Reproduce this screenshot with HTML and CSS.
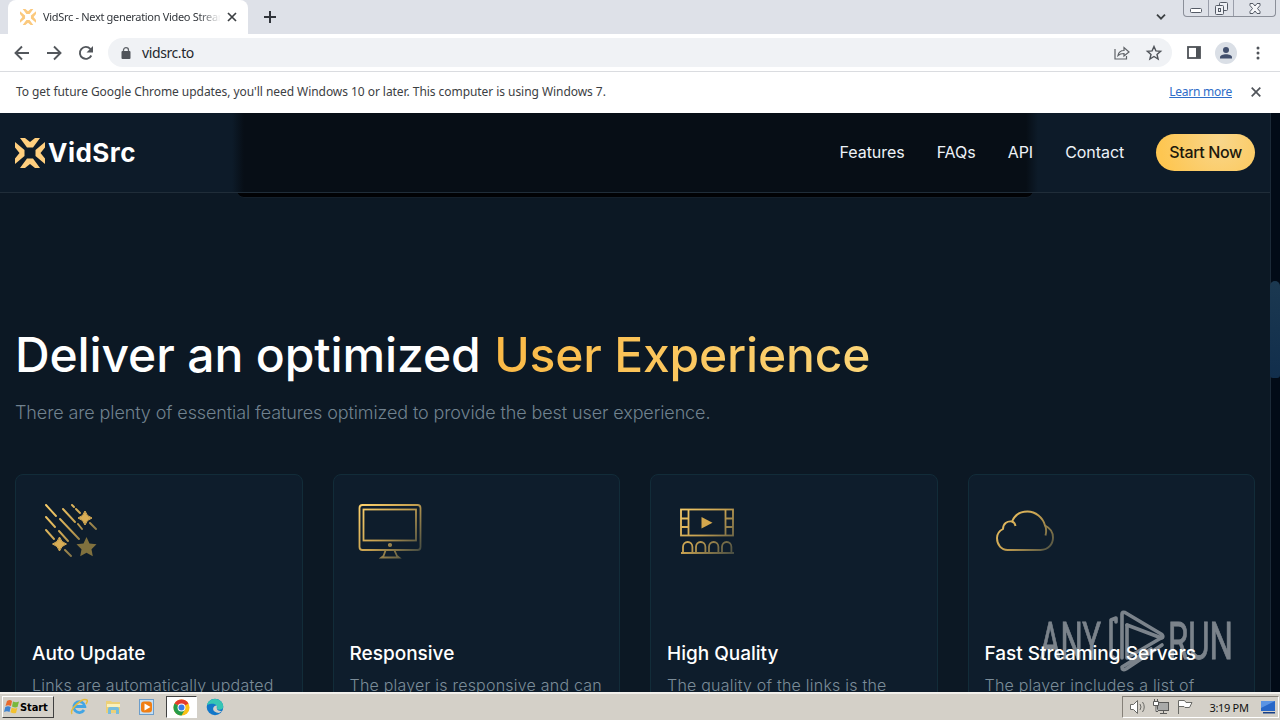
FILE: index.html
```html
<!DOCTYPE html>
<html lang="en">
<head>
    <meta charset="UTF-8">
    <title>VidSrc - Next generation Video Streaming</title>
    <link rel="stylesheet" href="styles.css">
</head>
<body>
    <!-- shared gradients and logo -->
    <svg class="defs" width="0" height="0">
        <defs>
            <linearGradient id="gold" gradientUnits="userSpaceOnUse" x1="12" y1="10" x2="68" y2="66">
                <stop offset="0" stop-color="#ffd36c"/>
                <stop offset="0.5" stop-color="#c5a050"/>
                <stop offset="1" stop-color="#3b4541"/>
            </linearGradient>
            <symbol id="logo" viewBox="0 0 30 30">
                <path d="M5 0h5l5 4 5-4h5l-7 9.500h-6zM5 30h5l5-4 5 4h5l-7-9.500h-6zM0 4l9.500 8v6L0 26v-5.500l4.500-5.500L0 9.500zM30 4l-9.500 8v6l9.500 8v-5.500L25.500 15 30 9.500z"/>
            </symbol>
        </defs>
    </svg>

    <div class="tabs">
        <div class="prev-tab"></div>
        <div class="tab">
            <svg class="favicon" width="16" height="16"><use href="#logo"/></svg>
            <span class="tab-title">VidSrc - Next generation Video Streaming</span>
            <svg width="10" height="10" viewBox="0 0 10 10"><path d="M1 1l8 8M9 1l-8 8" stroke="#3c4043" stroke-width="1.7"/></svg>
        </div>
        <svg class="new-tab" width="12" height="12" viewBox="0 0 12 12"><path d="M6 0v12M0 6h12" stroke="#30343a" stroke-width="2"/></svg>
        <svg class="tab-search" width="10" height="6" viewBox="0 0 10 6"><path d="M1 .7l4 4 4-4" fill="none" stroke="#3c4043" stroke-width="1.8"/></svg>
        <div class="win-buttons">
            <span class="min"><svg width="12" height="5" viewBox="0 0 12 5"><rect x=".5" y=".5" width="11" height="4" rx="1" fill="#fff" stroke="#555b66"/></svg></span>
            <span class="max"><svg width="13" height="13" viewBox="0 0 13 13" fill="#eef0f5" stroke="#555b66"><rect x="4.500" y=".5" width="8" height="8" rx="1"/><rect x=".5" y="3.500" width="8" height="9" rx="1"/><rect x="3.500" y="6.500" width="2" height="3"/></svg></span>
            <span class="close"><svg width="12" height="11" viewBox="0 0 12 11"><path d="M1 .5h3l2 2.500 2-2.500h3v2l-2.500 3L11 8.500v2H8L6 8l-2 2.500H1v-2l2.500-3L1 2.500z" fill="#f5f6f9" stroke="#555b66"/></svg></span>
        </div>
    </div>

    <div class="toolbar">
        <svg width="16" height="16" viewBox="0 0 16 16"><path d="M15 8H2M8 1.500L1.500 8 8 14.500" fill="none" stroke="#53575c" stroke-width="1.900"/></svg>
        <svg width="16" height="16" viewBox="0 0 16 16"><path d="M1 8h13M8 1.500L14.500 8 8 14.500" fill="none" stroke="#53575c" stroke-width="1.900"/></svg>
        <svg width="16" height="16" viewBox="0 0 16 16"><path d="M13.300 10.500A6 6 0 1 1 12.300 3.800L14 5.500" fill="none" stroke="#53575c" stroke-width="1.900"/><path d="M15 1v6.500H8.500z" fill="#53575c"/></svg>
        <div class="omnibox">
            <svg width="10" height="12" viewBox="0 0 10 12"><path d="M2.500 5V3a2.500 2.300 0 0 1 5 0v2" fill="none" stroke="#5f6368" stroke-width="1.300"/><rect x="0.500" y="4" width="9" height="8" rx="1" fill="#50545a"/></svg>
            <span class="url">vidsrc.to</span>
            <svg width="16" height="14" viewBox="0 0 16 14" fill="none" stroke="#5f6368" stroke-width="1.200"><path d="M1 3v10h11.500v-3"/><path d="M4 9.500c.6-3.500 2.800-5 6-5V1.500l5 4.500-5 4V7.500c-2.800 0-4.500.5-6 2z"/></svg>
            <svg width="16" height="16" viewBox="0 0 16 16"><path d="M8 1.500l1.900 4.400 4.700.4-3.600 3.100 1.100 4.600L8 11.500 3.900 14 5 9.400 1.400 6.300l4.700-.4z" fill="none" stroke="#50545a" stroke-width="1.400"/></svg>
        </div>
        <svg class="panel" width="14" height="13" viewBox="0 0 14 13"><rect x="1" y="1" width="12" height="11" fill="none" stroke="#4e5257" stroke-width="1.800"/><path d="M9 1h4v11H9z" fill="#4e5257"/></svg>
        <svg class="profile" width="22" height="22" viewBox="0 0 22 22"><circle cx="11" cy="11" r="11" fill="#dadfe6"/><circle cx="11" cy="8" r="3" fill="#414f6d"/><path d="M5 16.500v-1.300c0-4 12-4 12 0v1.300z" fill="#414f6d"/></svg>
        <svg class="dots" width="4" height="14" viewBox="0 0 4 14" fill="#50545a"><circle cx="2" cy="2" r="1.500"/><circle cx="2" cy="7" r="1.500"/><circle cx="2" cy="12" r="1.500"/></svg>
    </div>

    <div class="infobar">
        <span class="notice">To get future Google Chrome updates, you'll need Windows 10 or later. This computer is using Windows 7.</span>
        <a class="learn" href="#">Learn more</a>
        <svg width="10" height="10" viewBox="0 0 10 10"><path d="M.7.7l8.600 8.600M9.300.7L.7 9.300" stroke="#50545a" stroke-width="1.700"/></svg>
    </div>

    <div class="view">
        <div class="page">
            <div class="player"></div>
            <header class="header">
                <a class="brand" href="#">
                    <svg width="30" height="30"><use href="#logo"/></svg>
                    <span>VidSrc</span>
                </a>
                <nav class="nav">
                    <a href="#">Features</a>
                    <a href="#">FAQs</a>
                    <a href="#">API</a>
                    <a href="#">Contact</a>
                    <a class="btn" href="#">Start Now</a>
                </nav>
            </header>

            <section class="features">
                <h2>Deliver an optimized <span>User Experience</span></h2>
                <p class="lead">There are plenty of essential features optimized to provide the best user experience.</p>
                <div class="cards">
                    <div class="card">
                        <svg width="80" height="80" viewBox="0 0 80 80">
                            <path d="M14 14l10 11M14 26l9 10M14 39l8 9M27 40l9 10M28 28l19 20M31 18l12 13M40 14l2 2M44 18l4 4M46 33l4 5M58 32l6 6M33 59l6 6" stroke="url(#gold)" stroke-width="1.900" stroke-linecap="round"/>
                            <path d="M53 20q1.500 5.500 7 7-5.500 1.500-7 7-1.500-5.500-7-7 5.500-1.500 7-7zM27.500 46q1.500 5.500 7 7-5.500 1.500-7 7-1.500-5.500-7-7 5.500-1.500 7-7z" fill="#d8ad55" stroke="#d8ad55"/>
                            <path d="M54.500 46l3 6.500 7 .8-5 4.900 1.300 7-6.300-3.400-6.300 3.400 1.300-7-5-4.900 7-.8z" fill="#80713e"/>
                        </svg>
                        <h3>Auto Update</h3>
                        <p>Links are automatically updated<br>with new and better quality.</p>
                    </div>
                    <div class="card">
                        <svg width="80" height="80" viewBox="0 0 80 80" fill="none" stroke="url(#gold)" stroke-width="1.800">
                            <rect x="9.500" y="14" width="61" height="45" rx="3"/>
                            <rect x="13.500" y="18.500" width="52.500" height="31"/>
                            <circle cx="40" cy="54" r="1.200"/>
                            <path d="M35.500 59.500l-2 5.500-2 1.500H49l-2-1.500-2.500-5.500"/>
                        </svg>
                        <h3>Responsive</h3>
                        <p>The player is responsive and can<br>be used on any device.</p>
                    </div>
                    <div class="card">
                        <svg width="80" height="80" viewBox="0 0 80 80" fill="none" stroke="url(#gold)" stroke-width="1.800">
                            <rect x="14" y="18.500" width="52" height="26"/>
                            <path d="M21.500 18.500v26M58.500 18.500v26M14 27.500h7.500M14 36h7.500M58.500 27.500H66M58.500 36H66"/>
                            <path d="M34.500 26v11.500l11-5.700z" fill="#d3a74d" stroke="none"/>
                            <path d="M14 62h53M16 61.500V56a4.700 5 0 0 1 9.400 0v5.500M29 61.500V56a4.700 5 0 0 1 9.400 0v5.500M42 61.500V56a4.700 5 0 0 1 9.400 0v5.500M55 61.500V56a4.700 5 0 0 1 9.400 0v5.500"/>
                        </svg>
                        <h3>High Quality</h3>
                        <p>The quality of the links is the<br>best available at any time.</p>
                    </div>
                    <div class="card">
                        <svg width="80" height="80" viewBox="0 0 80 80" fill="none" stroke="url(#gold)" stroke-width="1.900">
                            <path d="M22.500 59h33c8 0 12.500-6 12.500-12.500 0-6-3-9.500-8-12C58 26.500 50.500 20.500 42.500 20.500c-8 0-13 4-15.500 10-5-.8-9 2.500-9 7.500-4 2-6 5-6 9C12 54 16.500 59 22.500 59z"/>
                            <path d="M27 30.500q3 1 3.500 4.500M60 34q2 5 .5 10.500"/>
                        </svg>
                        <h3>Fast Streaming Servers</h3>
                        <p>The player includes a list of<br>fast streaming servers.</p>
                    </div>
                </div>
            </section>
        </div>
        <div class="scrollbar"><div class="thumb"></div></div>
        <svg class="watermark" width="192" height="64" viewBox="0 0 192 64">
            <g fill="#fff" stroke="#fff" stroke-width="0.8" font-family="Roboto, sans-serif" font-size="52">
                <text x="0" y="49" textLength="61" lengthAdjust="spacingAndGlyphs">ANY</text>
                <text x="128" y="49" textLength="65" lengthAdjust="spacingAndGlyphs">RUN</text>
            </g>
            <g fill="none" stroke="#fff" stroke-width="3.600" stroke-linejoin="round" stroke-linecap="round">
                <path d="M76 12V8l-5 2v36l5 3"/>
                <path d="M82 48V4q0-2.500 3-1.500l37 22q2 2.500-.5 3.500L87 15"/>
                <path d="M87 15v33l34-20M122 35L86 59q-4 2-4-2l29-18"/>
            </g>
        </svg>
    </div>

    <div class="taskbar">
        <div class="start">
            <svg width="16" height="16" viewBox="0 0 16 16"><path d="M3 2q3-2 5 0L7 7Q4 5.500 1.500 7z" fill="#e8692c"/><path d="M9 2.500q3 1.500 6 0L13.500 8Q11 9 8 7.500z" fill="#79b83b"/><path d="M1.300 8Q4 6.500 6.700 8l-1.200 5Q3 11.500 0 13z" fill="#3f83d0"/><path d="M7.700 8.500q3 1.500 5.600.5L12 14q-3 1-5.500-.7z" fill="#f3c12f"/></svg>
            <b>Start</b>
        </div>
        <div class="task">
            <svg width="18" height="18" viewBox="0 0 18 18"><path d="M14 12a5.500 5.500 0 1 1 .8-3.500H5" fill="none" stroke="#42a5e4" stroke-width="2.800"/><path d="M2 16C-1 12 12-1 17 2q1 1-1 4" fill="none" stroke="#e6bb3b" stroke-width="1.500"/></svg>
        </div>
        <div class="task">
            <svg width="18" height="18" viewBox="0 0 18 18"><path d="M2 3h5l1 1h8v11H2z" fill="#ecd078"/><path d="M3 6h13v3H3z" fill="#fbf1bb"/><path d="M4 16v-5q0-2 2-2h7q2 0 2 2v5h-3v-4H7v4z" fill="#77bddd"/></svg>
        </div>
        <div class="task">
            <svg width="18" height="18" viewBox="0 0 18 18"><rect x="1.500" y="1.500" width="14" height="15" fill="#c4dff5" stroke="#6c9dca"/><rect x="3" y="3.500" width="11" height="11" rx="3" fill="#f07f15"/><path d="M6.500 5.500v7l6-3.500z" fill="#fff"/></svg>
        </div>
        <div class="task active">
            <svg width="17" height="17" viewBox="0 0 18 18"><circle cx="9" cy="9" r="8.500" fill="#fbc116"/><path d="M9 9L1.600 4.800A8.500 8.500 0 0 1 16.400 4.800z" fill="#e33b2e"/><path d="M9 9L1.600 4.800A8.500 8.500 0 0 0 9 17.500l4-7z" fill="#269b4b"/><circle cx="9" cy="9" r="4.200" fill="#fff"/><circle cx="9" cy="9" r="3.200" fill="#397be8"/></svg>
        </div>
        <div class="task">
            <svg width="18" height="18" viewBox="0 0 18 18"><circle cx="9" cy="9" r="8.300" fill="#1277c9"/><path d="M1 7C3-1 16-1 17.200 8c.3 4-4 4.500-6.500 3 2.300-4-3-7-9.700-4z" fill="#36c5b4"/><path d="M11 7.500c-5 0-6 7 2 7.500l3-2c-4 0-6-1-5-5.500z" fill="#d4d0c8"/></svg>
        </div>
        <div class="tray">
            <svg width="18" height="16" viewBox="0 0 18 16" fill="#fff" stroke="#6a6a66"><path d="M1.500 5.500h3l4-4v13l-4-4h-3z"/><path d="M11 5q2 3 0 6M13.500 3q3.500 5 0 10" fill="none"/></svg>
            <svg width="17" height="16" viewBox="0 0 17 16" stroke="#5a5a58"><rect x="3.500" y="3.500" width="11" height="8" fill="#a9aaa9"/><path d="M6 14.500h7M9.500 12v2" fill="none"/><path d="M-.5 2.500h5v4h-5zM.5 0v2M3.500 0v2M2 7v5.500h2" fill="#fff"/></svg>
            <svg width="16" height="16" viewBox="0 0 16 16"><path d="M.5 15V1.500h6l1.500 2h6l-2.500 5H7l-1-1H.5" fill="#fff" stroke="#6a6a66"/></svg>
            <span class="clock">3:19 PM</span>
            <svg width="16" height="14" viewBox="0 0 16 14"><path d="M1 1h14v10H1z" fill="#2867c8"/><path d="M1 1h14L1 8z" fill="#5b94e4"/><path d="M3 12h12v1.500H3z" fill="#173f86"/></svg>
        </div>
    </div>
</body>
</html>
```
FILE: styles.css
```css
* { box-sizing: border-box; }
body {
    margin: 0;
    width: 1280px;
    height: 720px;
    overflow: hidden;
    display: flex;
    flex-direction: column;
    background: #fff;
    font-family: "Noto Sans", sans-serif;
}
svg { display: block; flex: none; overflow: visible; }
a { color: inherit; text-decoration: none; }
h2, h3, p { margin: 0; }
.defs { position: absolute; }

/* browser window */
.tabs { flex: none; height: 34px; background: #dee1e8; display: flex; align-items: flex-start; }
.prev-tab { width: 8px; height: 34px; border-bottom-right-radius: 7px; background: #dee1e8; }
.tab { width: 240px; height: 34px; padding: 0 11px 0 12px; background: #fff; border-radius: 8px 8px 0 0; display: flex; align-items: center; }
.favicon { fill: #fbc97d; margin-right: 7px; }
.tab-title {
    width: 178px;
    margin: -1px 6px 0 0;
    overflow: hidden;
    white-space: nowrap;
    font-size: 11px;
    letter-spacing: -0.32px;
    color: #33373c;
    -webkit-mask-image: linear-gradient(to right, #000 155px, transparent 178px);
    mask-image: linear-gradient(to right, #000 155px, transparent 178px);
}
.new-tab { margin: 11px 0 0 16px; }
.tab-search { margin: 14px 17px 0 auto; }
.win-buttons { width: 93px; height: 17px; border: 1px solid #8b8f99; border-top: 0; border-radius: 0 0 4px 4px; display: flex; margin-right: 4px; }
.win-buttons span { display: flex; align-items: center; justify-content: center; border-right: 1px solid #9a9eaa; }
.win-buttons .min { width: 25px; padding-top: 5px; }
.win-buttons .max { width: 25px; }
.win-buttons .close { flex: 1; border-right: 0; }

.toolbar { flex: none; height: 38px; padding: 0 19px 0 14px; border-bottom: 1px solid #dadce0; display: flex; align-items: center; gap: 16px; }
.omnibox { width: 1064px; height: 29px; margin-left: -2px; padding: 0 10px 0 13px; border-radius: 15px; background: #f0f2f5; display: flex; align-items: center; }
.url { flex: 1; margin-left: 11px; font-size: 14px; letter-spacing: -0.4px; color: #24282d; }
.omnibox svg + svg { margin-left: 16px; }
.toolbar .panel { margin-left: -1px; }
.toolbar .profile { margin-left: -2px; }
.toolbar .dots { margin-left: 3px; }

.infobar { flex: none; height: 41px; padding: 0 19px 2px 16px; display: flex; align-items: center; font-size: 12px; color: #3c4043; }
.notice { flex: 1; letter-spacing: -0.055px; }
.learn { margin-right: 19px; color: #2e6dc8; text-decoration: underline; letter-spacing: -0.25px; }

/* site */
.view { flex: 1; min-height: 0; display: flex; position: relative; overflow: hidden; background: #0c1824; font-family: Inter, sans-serif; }
.page { width: 1270px; position: relative; }
.player { position: absolute; left: 237px; top: -40px; width: 796px; height: 125px; background: #010205; border-radius: 0 0 7px 7px; border-bottom: 1px solid #14202c; }
.header {
    position: relative;
    height: 80px;
    padding: 0 15px;
    display: flex;
    align-items: center;
    justify-content: space-between;
    border-bottom: 1px solid #202d39;
    background: linear-gradient(to right, #0d1b29 232px, #070e16 244px, #070e16 1026px, #0d1b29 1038px);
}
.brand { display: flex; align-items: center; gap: 3px; fill: #ffcf7e; color: #fff; font-size: 26px; font-weight: 700; letter-spacing: 0.5px; }
.nav { display: flex; align-items: center; gap: 32px; color: #edf2f8; font-size: 16px; letter-spacing: -0.04px; }
.nav a { margin-top: -1px; }
.nav .btn { height: 37px; margin-top: 0; padding: 0 13px; border-radius: 19px; line-height: 36px; letter-spacing: -0.35px; color: #20180c; font-weight: 500; background: radial-gradient(circle at 65% 20%, #f8d68b, #fec651 85%); }

.features { padding: 133px 15px 0; }
.features h2 { font-size: 48px; font-weight: 500; line-height: 58px; letter-spacing: -0.12px; color: #fff; white-space: nowrap; }
.features h2 span { margin-left: 1px; letter-spacing: -0.18px; color: transparent; background: linear-gradient(100deg, #fbb945, #fcd578); -webkit-background-clip: text; background-clip: text; }
.lead { margin-top: 14px; font-size: 18px; font-weight: 300; line-height: 30px; letter-spacing: -0.11px; color: #71828f; }
.cards { display: grid; grid-template-columns: repeat(4, 1fr); gap: 30px; margin-top: 46px; }
.card { height: 350px; padding: 16px 16px 15px; background: #0e1d2c; border: 1px solid #122c39; border-radius: 8px; }
.card h3 { margin-top: 69px; font-size: 19px; font-weight: 500; line-height: 28px; color: #fff; white-space: nowrap; }
.card p { margin-top: 4px; font-size: 16px; font-weight: 300; line-height: 26px; letter-spacing: 0.22px; white-space: nowrap; color: #7b8c98; }

.scrollbar { width: 10px; padding-top: 168px; background: #020b17; border-left: 1px solid #1c2a38; }
.thumb { height: 97px; margin-left: -1px; border-radius: 5px 5px 3px 3px; background: linear-gradient(#1b3850, #112e4c); }
.watermark { position: absolute; left: 1040px; top: 497px; opacity: 0.45; }

/* taskbar */
.taskbar { flex: none; height: 28px; padding: 2px 1px 2px 2px; background: #d4d0c8; border-top: 2px solid #f2f0ec; display: flex; align-items: center; }
.start { width: 52px; height: 22px; padding-left: 1px; border: 1px solid #fff; border-right-color: #404040; border-bottom-color: #404040; display: flex; align-items: center; font: 11px "DejaVu Sans Condensed", "DejaVu Sans", sans-serif; letter-spacing: -0.1px; margin-right: 8px; }
.task { width: 34px; height: 22px; display: flex; align-items: center; justify-content: center; }
.active { width: 31px; margin: 0 1px 0 2px; background: #fff; border: 1px solid #404040; border-right-color: #fff; border-bottom-color: #fff; }
.tray { width: 157px; height: 22px; margin-left: auto; padding: 0 2px 0 6px; border: 1px solid #858078; border-right-color: #fff; border-bottom-color: #fff; display: flex; align-items: center; gap: 7px; }
.clock { flex: 1; padding-left: 4px; text-align: center; white-space: nowrap; font-size: 11px; letter-spacing: -0.3px; color: #111; }
```
